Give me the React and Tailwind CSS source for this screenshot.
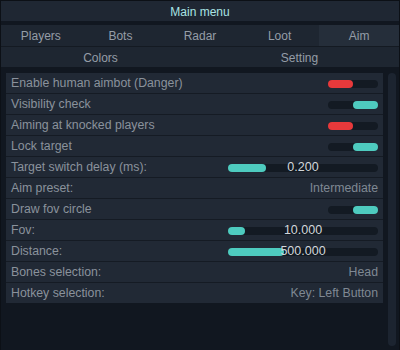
import React from "react";

const rows = [
  { label: "Enable human aimbot (Danger)", type: "toggle", on: false },
  { label: "Visibility check", type: "toggle", on: true },
  { label: "Aiming at knocked players", type: "toggle", on: false },
  { label: "Lock target", type: "toggle", on: true },
  { label: "Target switch delay (ms):", type: "slider", fill: 38, value: "0.200" },
  { label: "Aim preset:", type: "text", value: "Intermediate" },
  { label: "Draw fov circle", type: "toggle", on: true },
  { label: "Fov:", type: "slider", fill: 17, value: "10.000" },
  { label: "Distance:", type: "slider", fill: 56, value: "500.000" },
  { label: "Bones selection:", type: "text", value: "Head" },
  { label: "Hotkey selection:", type: "text", value: "Key: Left Button" },
];

function Toggle({ on }) {
  return (
    <div className="w-[50px] h-[8px] rounded-full bg-[#131a23] flex">
      {on ? (
        <div className="ml-auto w-[25px] h-full rounded-full bg-[#4ecbbf]" />
      ) : (
        <div className="w-[25px] h-full rounded-full bg-[#e8393b]" />
      )}
    </div>
  );
}

function Slider({ fill, value }) {
  return (
    <div className="relative w-[150px] h-[8px] rounded-full bg-[#131a23]">
      <div className="h-full rounded-full bg-[#4ecbbf]" style={{ width: fill }} />
      <span className="absolute inset-0 flex items-center justify-center text-[12.5px] text-[#d2d6da] leading-none">
        {value}
      </span>
    </div>
  );
}

export default function App() {
  const tabs = ["Players", "Bots", "Radar", "Loot", "Aim"];
  return (
    <div
      className="w-[400px] h-[350px] bg-[#111720] flex flex-col overflow-hidden border-t border-l border-r border-[#0c1016]"
      style={{ fontFamily: '"Liberation Sans", Arial, sans-serif' }}
    >
      <div className="h-[20px] bg-[#1f2733] flex items-center justify-center text-[12px] text-[#a9e4e4] pt-px">
        Main menu
      </div>
      <div className="h-[4px]" />
      <div className="h-[22px] grid grid-cols-5 bg-[#1e2631] border-b border-[#141a22]">
        {tabs.map((t) => (
          <div
            key={t}
            className={
              "flex items-center justify-center text-[12px] text-[#959da7] pt-px " +
              (t === "Aim" ? "bg-[#252e3a]" : "")
            }
          >
            {t}
          </div>
        ))}
      </div>
      <div className="h-[20px] grid grid-cols-2 bg-[#1e2631]">
        <div className="flex items-center justify-center text-[12px] text-[#959da7] pt-px">Colors</div>
        <div className="flex items-center justify-center text-[12px] text-[#959da7] pt-px">Setting</div>
      </div>
      <div className="flex flex-1 pt-[6px] pl-[5px] pr-[3px] pb-[4px] gap-[5px]">
        <div className="w-[377px] self-start bg-[#151b24] flex flex-col gap-px">
          {rows.map((r) => (
            <div
              key={r.label}
              className="h-[20px] bg-[#212935] flex items-center justify-between pl-[5px] pr-[5px] pt-px text-[12.3px] text-[#8a929c]"
            >
              <span>{r.label}</span>
              {r.type === "toggle" && <Toggle on={r.on} />}
              {r.type === "slider" && <Slider fill={r.fill} value={r.value} />}
              {r.type === "text" && <span className="text-[#7f8893]">{r.value}</span>}
            </div>
          ))}
        </div>
        <div className="w-[8px] bg-[#1c2430] rounded-full" />
      </div>
    </div>
  );
}
